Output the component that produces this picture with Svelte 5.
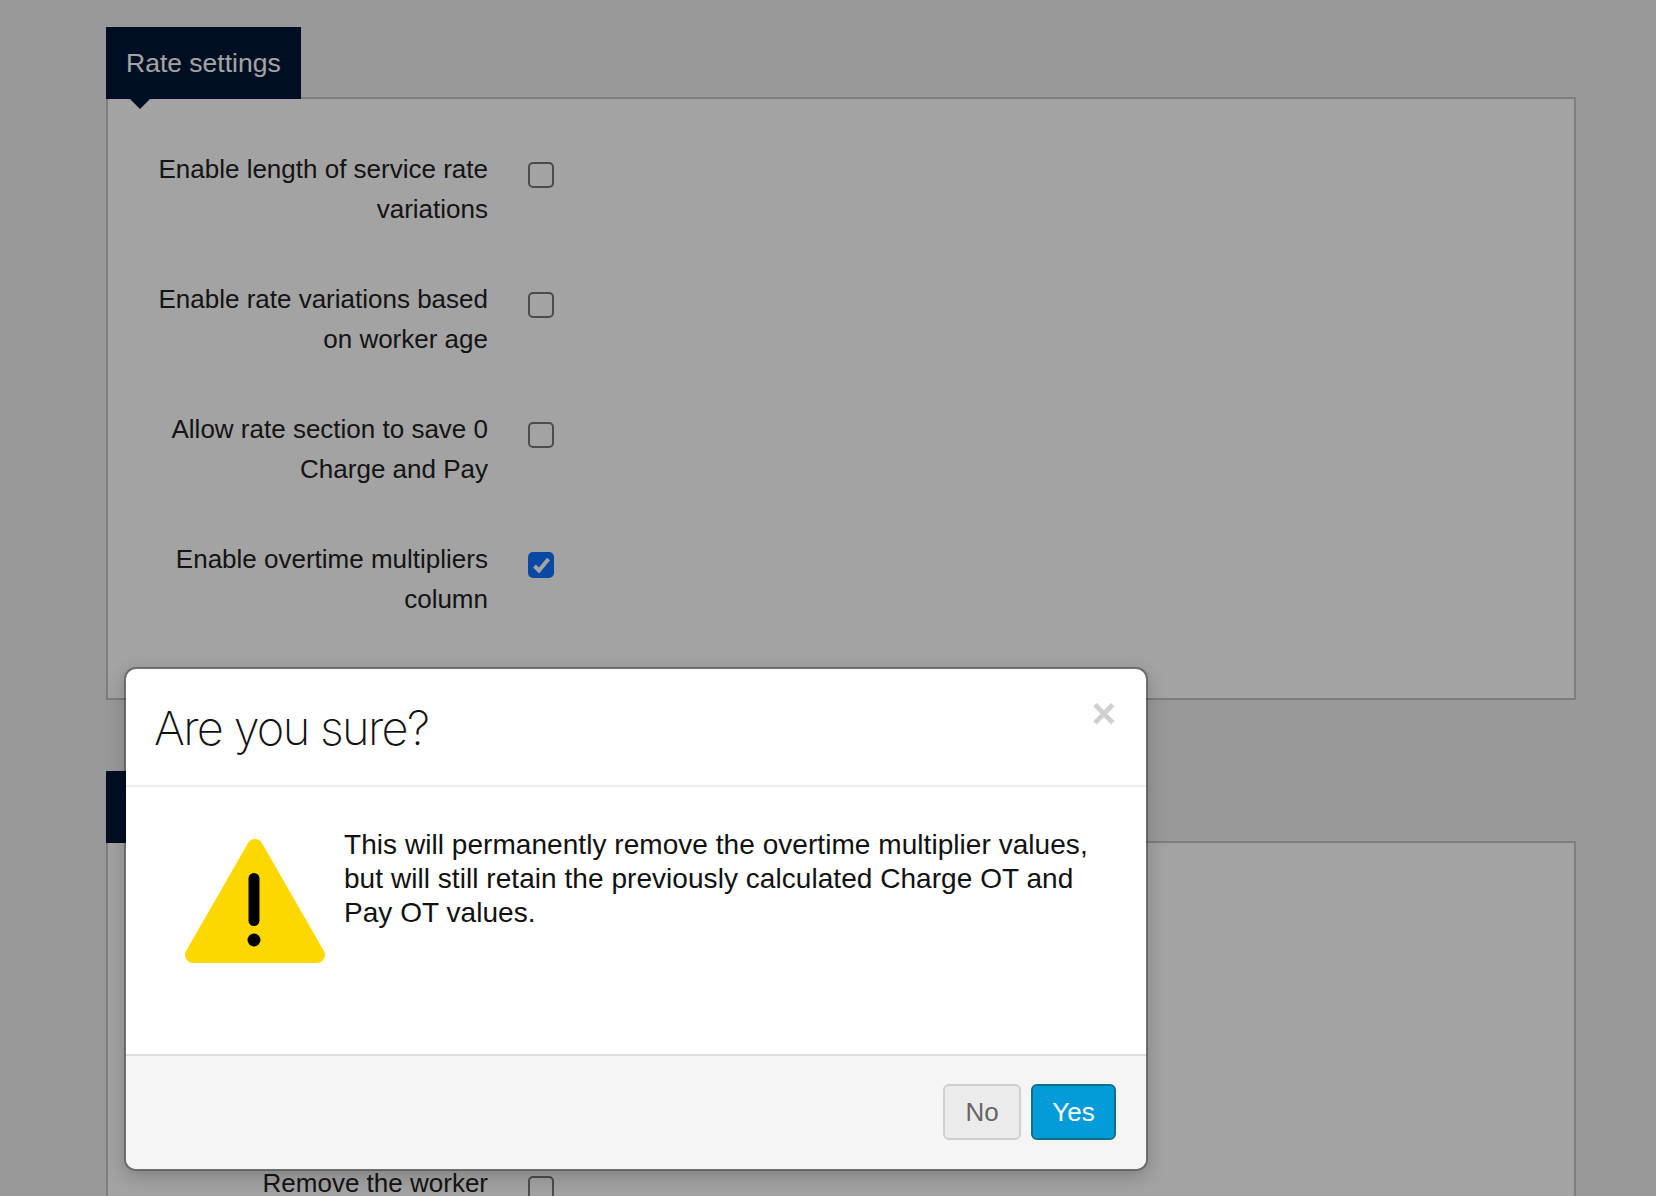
<script>
  const rateRows = [
    { label: 'Enable length of service rate variations', checked: false },
    { label: 'Enable rate variations based on worker age', checked: false },
    { label: 'Allow rate section to save 0 Charge and Pay', checked: false },
    { label: 'Enable overtime multipliers column', checked: true }
  ];
</script>

<div class="page">
  <section class="group">
    <h2 class="tab">Rate settings</h2>
    <div class="panel">
      {#each rateRows as row}
        <div class="row">
          <span class="label">{row.label}</span>
          <span class="check" class:on={row.checked}>
            {#if row.checked}
              <svg viewBox="0 0 26 26" width="26" height="26"><path d="M6.500 14L11 18.500L20.500 7" fill="none" stroke="#fff" stroke-width="4" /></svg>
            {/if}
          </span>
        </div>
      {/each}
    </div>
  </section>

  <section class="group">
    <h2 class="tab">Worker rules</h2>
    <div class="panel lower">
      <div class="row">
        <span class="label">Remove the worker</span>
        <span class="check"></span>
      </div>
    </div>
  </section>

  <div class="backdrop"></div>

  <div class="modal">
    <header class="modal-head">
      <h1>Are you sure?</h1>
      <button class="close">×</button>
    </header>
    <div class="modal-body">
      <svg class="warn" viewBox="0 0 140 124" width="140" height="124">
        <path d="M70 8L8 116H132Z" fill="#fdd800" stroke="#fdd800" stroke-width="16" stroke-linejoin="round" />
        <line x1="69" y1="39.500" x2="69" y2="81.500" stroke="#000" stroke-width="11" stroke-linecap="round" />
        <circle cx="69" cy="101" r="6.500" fill="#000" />
      </svg>
      <p>This will permanently remove the overtime multiplier values, but will still retain the previously calculated Charge OT and Pay OT values.</p>
    </div>
    <footer class="modal-foot">
      <button class="btn no">No</button>
      <button class="btn yes">Yes</button>
    </footer>
  </div>
</div>

<style>
  :global(body) {
    margin: 0;
    background: #f0f0f0;
  }
  .page {
    position: relative;
    height: 1196px;
    overflow: hidden;
    padding: 27px 80px 0 106px;
    box-sizing: border-box;
    background: #f0f0f0;
    font-family: "Liberation Sans", Arial, sans-serif;
    color: #222;
  }
  .group {
    margin-bottom: 71px;
  }
  .tab {
    position: relative;
    z-index: 1;
    display: inline-block;
    width: 195px;
    height: 72px;
    margin: 0;
    box-sizing: border-box;
    padding-left: 20px;
    background: #001638;
    color: #fff;
    font-size: 26.500px;
    font-weight: 400;
    line-height: 72px;
    white-space: nowrap;
    vertical-align: top;
  }
  .tab::after {
    content: "";
    position: absolute;
    left: 24px;
    top: 72px;
    border-left: 10px solid transparent;
    border-right: 10px solid transparent;
    border-top: 10px solid #001638;
  }
  .panel {
    margin-top: -2px;
    height: 603px;
    box-sizing: border-box;
    padding: 50px 0 0;
    border: 2px solid #c6c6c6;
    background: #fff;
  }
  .panel.lower {
    height: 600px;
    padding-top: 320px;
  }
  .row {
    display: flex;
    align-items: flex-start;
    height: 130px;
  }
  .label {
    width: 380px;
    box-sizing: border-box;
    padding-left: 40px;
    text-align: right;
    font-size: 26px;
    line-height: 40px;
  }
  .check {
    margin: 13px 0 0 40px;
    width: 26px;
    height: 26px;
    box-sizing: border-box;
    border: 2px solid #777;
    border-radius: 5px;
    background: #fff;
  }
  .check.on {
    border: none;
    background: #1173ff;
  }
  .check svg {
    display: block;
  }
  .backdrop {
    position: absolute;
    inset: 0;
    z-index: 5;
    background: rgba(0, 0, 0, 0.36);
  }
  .modal {
    position: absolute;
    z-index: 6;
    left: 124px;
    top: 667px;
    width: 1024px;
    height: 504px;
    box-sizing: border-box;
    display: flex;
    flex-direction: column;
    border: 2px solid rgba(0, 0, 0, 0.3);
    border-radius: 12px;
    background: #fff;
    background-clip: padding-box;
    box-shadow: 0 6px 20px rgba(0, 0, 0, 0.2);
    overflow: hidden;
  }
  .modal-head {
    height: 118px;
    flex: none;
    box-sizing: border-box;
    display: flex;
    justify-content: space-between;
    align-items: flex-start;
    padding: 29px 30px 0 28px;
    border-bottom: 2px solid #eee;
  }
  .modal-head h1 {
    margin: 0;
    font-family: Inter, "Liberation Sans", sans-serif;
    font-size: 47px;
    font-weight: 200;
    line-height: 60px;
    letter-spacing: -1.700px;
    color: #111;
  }
  .close {
    margin-top: -4px;
    padding: 0;
    border: none;
    background: none;
    font-family: "Liberation Sans", Arial, sans-serif;
    font-size: 42px;
    font-weight: 700;
    line-height: 40px;
    color: #d0d0d0;
  }
  .modal-body {
    flex: 1;
    display: flex;
    align-items: flex-start;
    padding: 41px 50px 0 59px;
  }
  .warn {
    flex: none;
    margin: 11px 19px 0 0;
  }
  .modal-body p {
    margin: 0;
    font-size: 28px;
    line-height: 34px;
    letter-spacing: 0.050px;
    color: #111;
  }
  .modal-foot {
    height: 115px;
    flex: none;
    box-sizing: border-box;
    display: flex;
    justify-content: flex-end;
    gap: 10px;
    padding: 28px 30px 0 0;
    border-top: 2px solid #ddd;
    background: #f5f5f5;
  }
  .btn {
    height: 56px;
    box-sizing: border-box;
    border-radius: 6px;
    font-family: "Liberation Sans", Arial, sans-serif;
    font-size: 26px;
    padding: 0;
  }
  .no {
    width: 78px;
    border: 2px solid #cfcfcf;
    background: #ebebeb;
    color: #666;
  }
  .yes {
    width: 85px;
    border: 2px solid #0f7189;
    background: #049cd8;
    color: #fff;
  }
</style>
